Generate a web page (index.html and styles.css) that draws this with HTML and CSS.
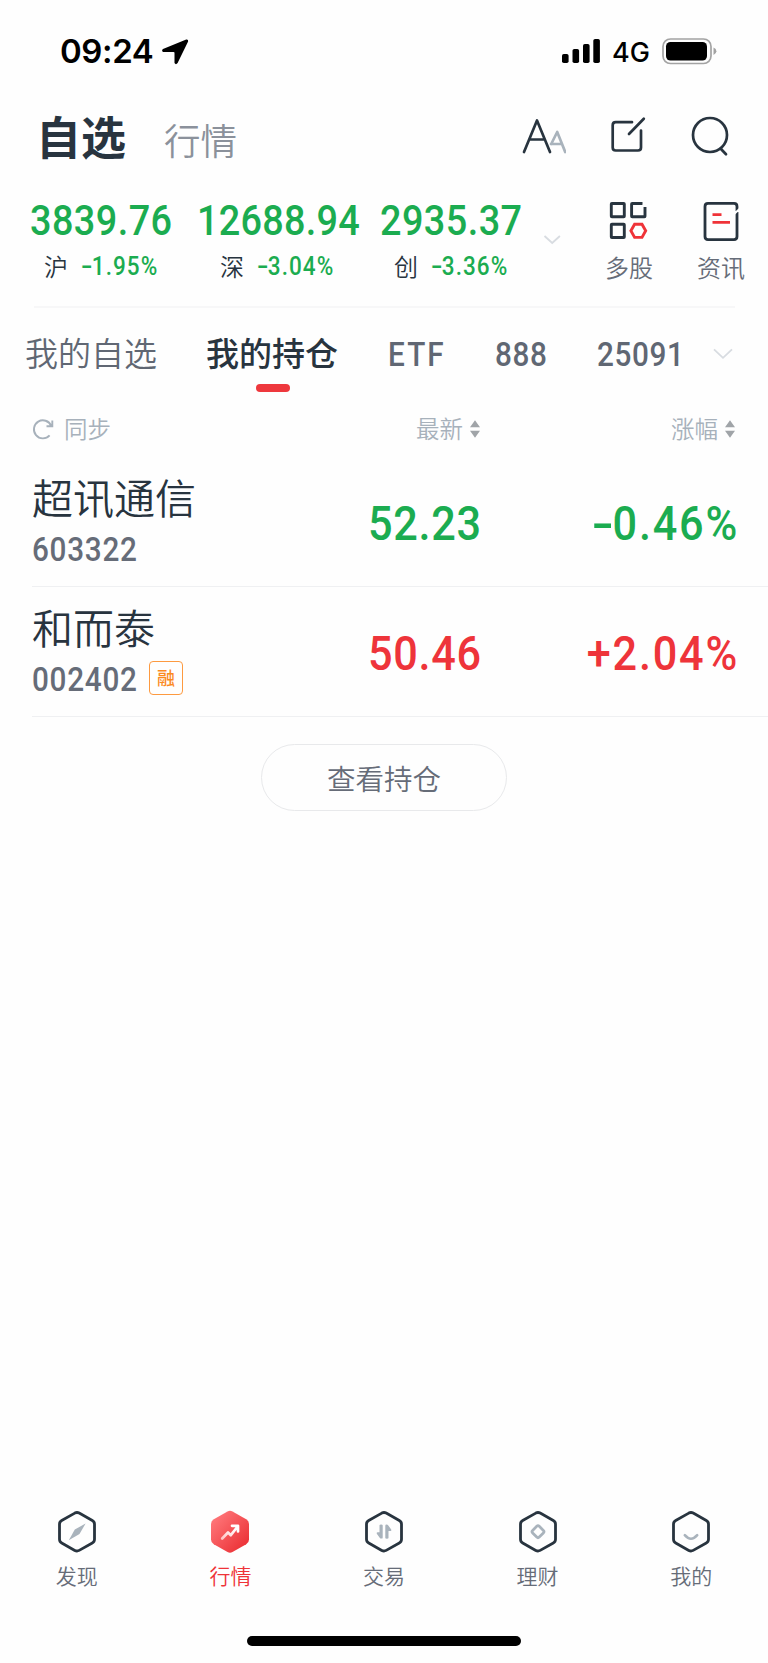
FILE: index.html
```html
<!DOCTYPE html>
<html lang="zh-CN">
<head>
<meta charset="utf-8">
<title>自选</title>
<link rel="stylesheet" href="styles.css">
</head>
<body>
<div class="app">
  <div class="status">
    <span class="time">09:24</span>
    <svg class="locate" width="28" height="28" viewBox="0 0 28 28"><path d="M25.2 1.600 2 10.900Q.2 12.200 2 13.900H12.500Q13.500 13.900 13.500 14.800V25Q14.900 27.300 16.600 25L27.100 3.600Q27.600 1.200 25.200 1.600Z"/></svg>
    <svg class="signal" width="40" height="26" viewBox="0 0 40 26"><rect x="0" y="15" width="6.600" height="9" rx="1.800"/><rect x="10.500" y="10" width="6.600" height="14" rx="1.800"/><rect x="21" y="5" width="6.600" height="19" rx="1.800"/><rect x="31.300" y="0" width="6.600" height="24" rx="1.800"/></svg>
    <span class="net">4G</span>
    <svg class="battery" width="56" height="28" viewBox="0 0 56 28"><rect x="1" y="1" width="48" height="24.500" rx="7.500" fill="none" stroke="#a3a3a3" stroke-width="1.700"/><rect x="4" y="4" width="41" height="18.500" rx="4.500"/><path d="M51.500 9.500Q54.400 10.600 54.400 13.200T51.500 17Z" fill="#a3a3a3"/></svg>
  </div>

  <div class="header">
    <span class="title">自选</span>
    <span class="subtitle">行情</span>
    <div class="tools">
      <svg width="46" height="40" viewBox="0 0 46 40"><path d="M31 29H41M31.200 29l6-12 8 20" stroke="#a9b3bc"/><path d="M4 37 17 5.500 30 37M9.500 24.500H24.500"/></svg>
      <svg width="38" height="40" viewBox="0 0 38 40"><path d="M24 7.200H7.700q-3 0-3 3V32.500q0 3 3 3H30q3 0 3-3V15.500M21 19 35.800 3.800"/></svg>
      <svg width="40" height="42" viewBox="0 0 40 42"><circle cx="20" cy="20" r="17"/><path d="m31 34 5 5.200"/></svg>
    </div>
  </div>

  <div class="indices">
    <div class="index i1"><div class="price">3839.76</div><div class="sub"><span class="mkt">沪</span><span class="chg"><span class="sign">-</span>1.95%</span></div></div>
    <div class="index i2"><div class="price">12688.94</div><div class="sub"><span class="mkt">深</span><span class="chg"><span class="sign">-</span>3.04%</span></div></div>
    <div class="index i3"><div class="price">2935.37</div><div class="sub"><span class="mkt">创</span><span class="chg"><span class="sign">-</span>3.36%</span></div></div>
    <svg class="chev chev-a" width="20" height="12" viewBox="0 0 20 12"><path d="m2.500 2 7.700 7 7.700-7"/></svg>
    <div class="shortcut s1">
      <svg width="42" height="42" viewBox="0 0 42 42"><g fill="none" stroke="#28343f" stroke-width="2.900"><rect x="3.300" y="3.500" width="13" height="13.300" rx=".6"/><rect x="3.300" y="24.200" width="13" height="13.300" rx=".6"/><path d="M34.500 3.500H24.200q-.6 0-.6.6V16.200q0 .6.6.6H36.400q.6 0 .6-.6V7"/><path d="M26.600 24.200H34l3.700 6.600-3.700 6.600H26.600l-3.700-6.600Z" stroke="#ef3338"/></g><path d="m33 8 5-6" stroke="#fefefe" stroke-width="1.500"/></svg>
      <span>多股</span>
    </div>
    <div class="shortcut s2">
      <svg width="42" height="42" viewBox="0 0 42 42"><g fill="none" stroke="#28343f" stroke-width="2.800"><path d="M37 11V6.400q0-3-3-3H8q-3 0-3 3V36.600q0 3 3 3H34q3 0 3-3V12"/><path d="M12.500 14.700H21.500M12.500 22.400H30" stroke="#ef3338"/></g><path d="m33.500 14.500 6-5.500" stroke="#fefefe" stroke-width="2"/></svg>
      <span>资讯</span>
    </div>
  </div>

  <div class="tabs">
    <span class="tab t1">我的自选</span>
    <span class="tab t2 active">我的持仓</span>
    <span class="tab latin t3">ETF</span>
    <span class="tab latin t4">888</span>
    <span class="tab latin t5">25091</span>
    <svg class="chev chev-b" width="22" height="14" viewBox="0 0 22 14"><path d="m2 2.300 9 8.500 9-8.500"/></svg>
  </div>

  <div class="columns">
    <div class="sync"><svg width="23" height="23" viewBox="0 0 23 23"><path d="M17.600 17.400A9 9 0 1 1 19.200 7.800M20.300 2.600V8.300H14.500" fill="none" stroke="#a7b1bb" stroke-width="1.900"/></svg><span>同步</span></div>
    <div class="sort c2"><span>最新</span><svg width="10" height="18" viewBox="0 0 10 18"><path d="M0 7.200 5 .3 10 7.200ZM0 10.800H10L5 17.700Z"/></svg></div>
    <div class="sort c3"><span>涨幅</span><svg width="10" height="18" viewBox="0 0 10 18"><path d="M0 7.200 5 .3 10 7.200ZM0 10.800H10L5 17.700Z"/></svg></div>
  </div>

  <div class="stocks">
    <div class="stock down">
      <div class="who"><div class="name">超讯通信</div><div class="code"><span class="digits">603322</span></div></div>
      <div class="last">52.23</div><div class="pct"><span class="sign">-</span>0.46%</div>
    </div>
    <div class="stock up">
      <div class="who"><div class="name">和而泰</div><div class="code"><span class="digits">002402</span><span class="badge">融</span></div></div>
      <div class="last">50.46</div><div class="pct">+2.04%</div>
    </div>
  </div>

  <button class="view">查看持仓</button>

  <nav class="nav">
    <div class="item"><svg width="42" height="44" viewBox="0 0 42 44"><path class="hex" d="M18.800 3.100Q21 1.900 23.200 3.100L36.300 10.500Q38.500 11.700 38.500 14.200V29.300Q38.500 31.800 36.300 33L23.200 40.400Q21 41.600 18.800 40.400L5.700 33Q3.500 31.800 3.500 29.300V14.200Q3.500 11.700 5.700 10.500Z"/><path d="M29.600 13.500 23.500 24 12.800 30.200 18.800 19.500Z" fill="#a9b3bc"/></svg><span>发现</span></div>
    <div class="item on"><svg width="42" height="44" viewBox="0 0 42 44"><defs><linearGradient id="red" x1="0" y1="0" x2="1" y2="1"><stop offset=".1" stop-color="#ff777a"/><stop offset=".9" stop-color="#eb3035"/></linearGradient><linearGradient id="trend" x1="0" y1="1" x2="1" y2="0"><stop offset="0" stop-color="#ffc5c6"/><stop offset=".8" stop-color="#fff"/></linearGradient></defs><path d="M18.500 1.500Q21 .2 23.500 1.500L37.200 9.200Q40 10.800 40 14V29.500Q40 32.700 37.200 34.300L23.500 42Q21 43.300 18.500 42L4.800 34.300Q2 32.700 2 29.500V14Q2 10.800 4.800 9.200Z" fill="url(#red)"/><path d="M13.200 28.500 19 22.500 21.800 25.200 28.300 17M23 15.800H29V21.500" fill="none" stroke="url(#trend)" stroke-width="2.700" stroke-linecap="round" stroke-linejoin="round"/></svg><span>行情</span></div>
    <div class="item"><svg width="42" height="44" viewBox="0 0 42 44"><path class="hex" d="M18.800 3.100Q21 1.900 23.200 3.100L36.300 10.500Q38.500 11.700 38.500 14.200V29.300Q38.500 31.800 36.300 33L23.200 40.400Q21 41.600 18.800 40.400L5.700 33Q3.500 31.800 3.500 29.300V14.200Q3.500 11.700 5.700 10.500Z"/><path d="M16.500 15.300q0-.8 1.600-.8t1.600.8V27.400q0 1.200-1.200 1.200t-1.800-.9l-2.900-3.900q-.6-1.500.7-1.500h2ZM25.500 27.900q0 .8-1.600.8t-1.600-.8V15.800q0-1.200 1.200-1.200t1.800.9l2.900 3.900q.6 1.500-.7 1.500h-2Z" fill="#a9b3bc"/></svg><span>交易</span></div>
    <div class="item"><svg width="42" height="44" viewBox="0 0 42 44"><path class="hex" d="M18.800 3.100Q21 1.900 23.200 3.100L36.300 10.500Q38.500 11.700 38.500 14.200V29.300Q38.500 31.800 36.300 33L23.200 40.400Q21 41.600 18.800 40.400L5.700 33Q3.500 31.800 3.500 29.300V14.200Q3.500 11.700 5.700 10.500Z"/><rect x="16.300" y="17" width="9.400" height="9.400" rx="1.800" transform="rotate(45 21 21.700)" fill="none" stroke="#a9b3bc" stroke-width="2.700"/></svg><span>理财</span></div>
    <div class="item"><svg width="42" height="44" viewBox="0 0 42 44"><path class="hex" d="M18.800 3.100Q21 1.900 23.200 3.100L36.300 10.500Q38.500 11.700 38.500 14.200V29.300Q38.500 31.800 36.300 33L23.200 40.400Q21 41.600 18.800 40.400L5.700 33Q3.500 31.800 3.500 29.300V14.200Q3.500 11.700 5.700 10.500Z"/><path d="M14.800 25.200Q21 32.200 27.200 25.200" fill="none" stroke="#a9b3bc" stroke-width="2.600" stroke-linecap="round"/></svg><span>我的</span></div>
  </nav>
  <div class="home"></div>
</div>
</body>
</html>
```
FILE: styles.css
```css
* { box-sizing: border-box; }
body { margin: 0; background: #fefefe; font-family: "Noto Sans CJK SC", sans-serif; color: #28343f; }
svg { display: block; flex: none; }
span, div { white-space: nowrap; }
.app { width: 768px; height: 1663px; display: flex; flex-direction: column; overflow: hidden; }

.status { height: 100px; display: flex; align-items: flex-start; padding: 38px 0 0 60px; color: #000; font-family: Inter, sans-serif; }
.time { width: 101px; font-size: 33px; font-weight: 600; line-height: 26px; letter-spacing: -.4px; }
.signal { margin: 1px 0 0 373px; }
.net { width: 50px; margin-left: 10px; font-size: 27px; font-weight: 500; line-height: 29px; }

.header { height: 80px; display: flex; align-items: flex-start; padding-left: 36px; }
.title { width: 128px; font-size: 45px; font-weight: 700; line-height: 71px; }
.subtitle { width: 72px; font-size: 36.500px; font-weight: 350; line-height: 79px; color: #8b919b; }
.tools { display: flex; margin: 15px 0 0 284px; fill: none; stroke: #28343f; stroke-width: 2.700; stroke-linecap: round; stroke-linejoin: round; }
.tools svg:nth-child(2) { margin-left: 42px; }
.tools svg:nth-child(3) { margin-left: 44px; }

.indices { height: 128px; display: flex; margin: 0 33px 0 34px; border-bottom: 2px solid #f7f7f8; }
.index { flex: none; padding-top: 18px; color: #1bac50; font-family: Roboto, sans-serif; font-weight: 500; }
.i1 { width: 167px; margin-left: -4px; }
.i2 { width: 183px; }
.i3 { width: 160px; }
/* Roboto is condensed slightly to give the numerals their narrow, open rhythm */
.price, .chg, .latin, .digits, .last { transform: scaleX(.9); transform-origin: left; }
.pct { transform: scaleX(.9); transform-origin: right; }
.price { height: 46px; font-size: 42px; line-height: 45px; letter-spacing: .5px; }
.i2 .price { letter-spacing: .3px; }
.sub { display: flex; height: 44px; padding-left: 14px; }
.i2 .sub { padding-left: 23px; }
.mkt { width: 37px; font: 350 24px/43px "Noto Sans CJK SC", sans-serif; color: #28343f; }
.chg { font-size: 25px; line-height: 46px; letter-spacing: 1.200px; }
.sign { display: inline-block; transform: scaleX(1.5); }
.chg .sign { width: 12px; padding-left: 2px; letter-spacing: 0; }
.chev { fill: none; stroke: #d8dce1; stroke-width: 1.800; }
.chev-a { margin: 54px 0 0 2px; }
.shortcut { flex: none; width: 50px; display: flex; flex-direction: column; align-items: center; padding-top: 20px; font-size: 24px; line-height: 49px; color: #666c78; font-weight: 350; }
.s1 { margin-left: 42px; }
.s2 { margin-left: 42px; }

.tabs { height: 97px; display: flex; padding-left: 25px; }
.tab { flex: none; font-size: 33px; line-height: 89px; color: #606773; font-weight: 350; }
.t1 { width: 181px; }
.t2 { width: 182px; }
.t3 { width: 107px; }
.t4 { width: 102px; }
.t5 { width: 115px; }
.active { position: relative; color: #28343f; font-weight: 500; }
.active::after { content: ""; position: absolute; left: 50px; top: 76px; width: 34px; height: 8px; border-radius: 4px; background: #ee383d; }
.latin { font-family: Roboto, sans-serif; font-weight: 500; letter-spacing: .7px; line-height: 93px; }
.t3 { letter-spacing: 2.300px; }
.chev-b { margin-top: 39px; }

.columns { height: 52px; display: flex; padding-left: 32px; font-size: 23.500px; line-height: 47px; color: #a7b1bb; font-weight: 350; }
.sync { width: 384px; display: flex; gap: 9px; }
.sync svg { margin-top: 13px; }
.sort { display: flex; gap: 7px; fill: #a0a4a8; }
.sort svg { margin-top: 15px; }
.c2 { width: 255px; }

.stocks { padding-left: 32px; }
.stock { height: 130px; display: flex; border-bottom: 1px solid #eff0f2; }
.name { height: 63px; font-size: 41px; line-height: 78px; color: #28343f; font-weight: 350; }
.who { width: 299px; }
.code { display: flex; align-items: center; height: 56px; font: 500 33px/56px Roboto, sans-serif; color: #666c78; padding-top: 3px; }
.digits { width: 117px; letter-spacing: .8px; }
.badge { width: 34px; height: 34px; border: 1.500px solid #fd9a40; border-radius: 4px; font: 500 18px/31px "Noto Sans CJK SC", sans-serif; text-align: center; color: #fb8a1e; margin-top: -3px; }
.last, .pct { font: 500 48px/134px Roboto, sans-serif; }
.last { width: 152px; padding-left: 41px; letter-spacing: .8px; }
.pct { width: 256px; text-align: right; letter-spacing: 2px; }
.pct .sign { width: 23px; padding-left: 4px; letter-spacing: 0; text-align: left; }
.down { color: #1bac50; }
.up { color: #ee343a; }

.view { align-self: center; width: 246px; height: 67px; margin-top: 27px; padding: 0; background: none; border: 1px solid #e8e9eb; border-radius: 34px; font: 350 28.500px/66px "Noto Sans CJK SC", sans-serif; color: #666c78; }

.nav { display: flex; margin-top: auto; height: 126px; }
.item { flex: 1; display: flex; flex-direction: column; align-items: center; font-size: 21px; line-height: 42px; color: #666c78; font-weight: 350; }
.on { color: #ef3338; }
.hex { fill: none; stroke: #28343f; stroke-width: 2.800; }
.home { flex: none; align-self: center; width: 274px; height: 10px; margin-bottom: 17px; border-radius: 5px; background: #000; }
```
